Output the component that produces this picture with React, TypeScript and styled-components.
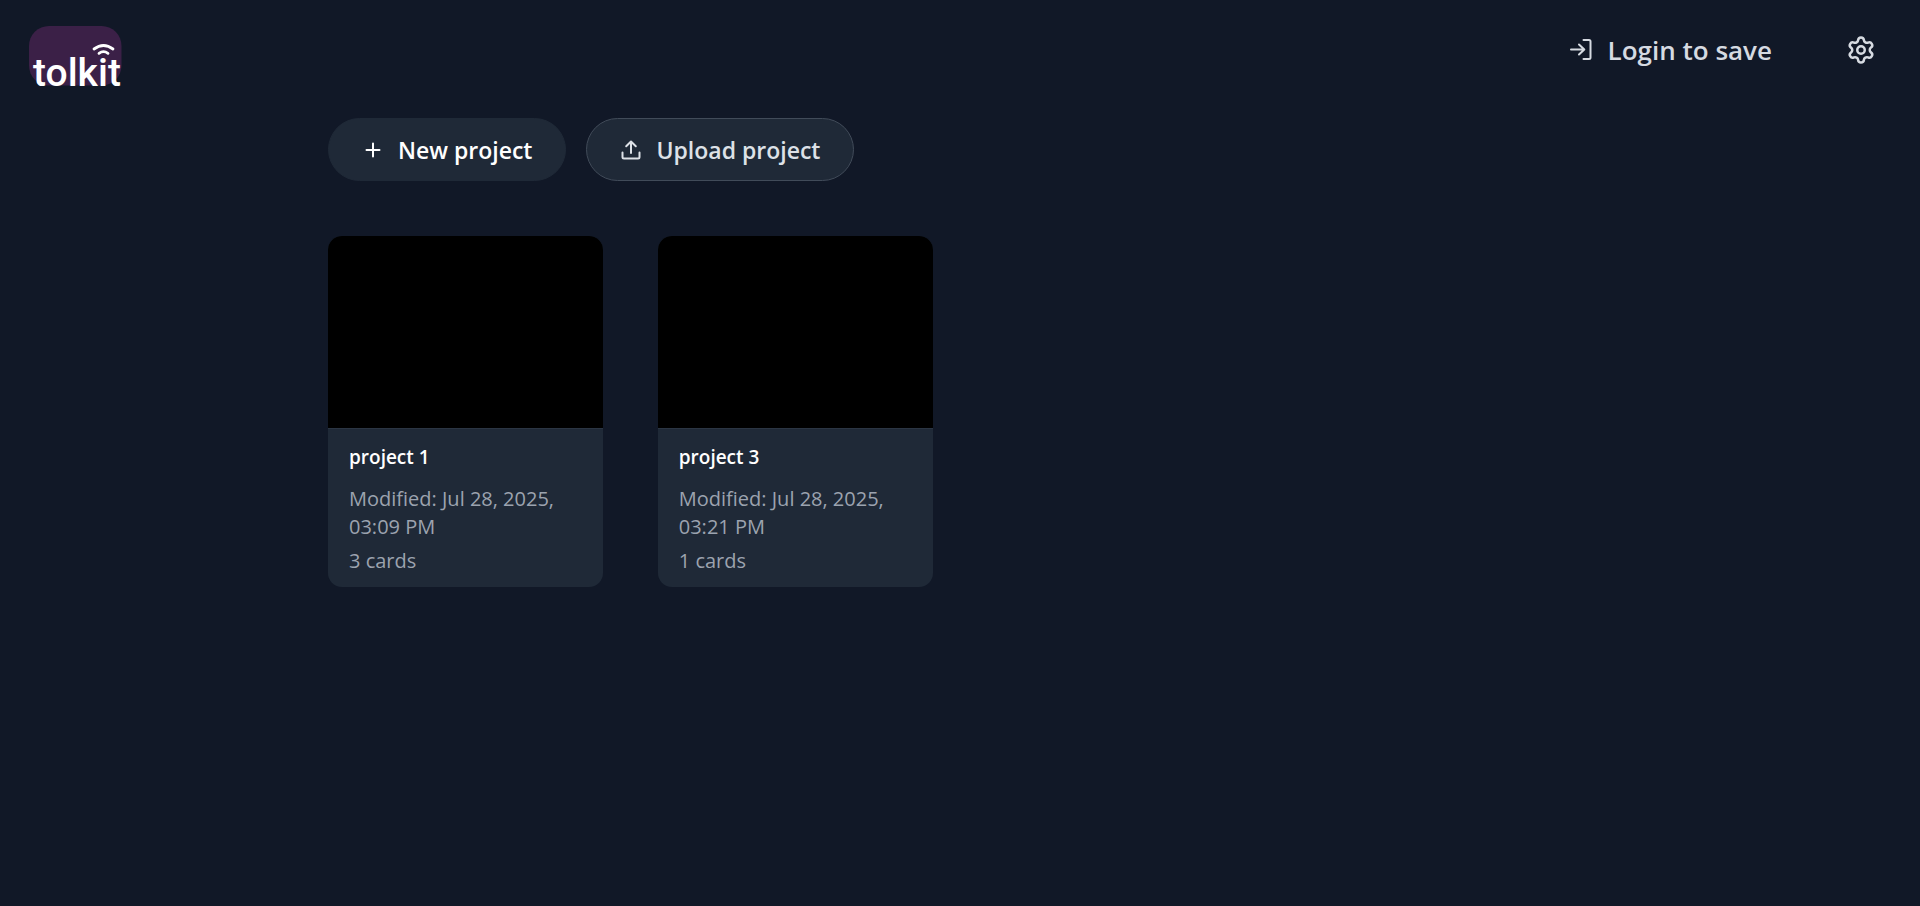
import React from "react";
import styled, { createGlobalStyle } from "styled-components";
import { Settings } from "lucide-react";

const GlobalStyle = createGlobalStyle`
  *, *::before, *::after { box-sizing: border-box; }
  body {
    margin: 0;
    background: #111827;
    color: #ffffff;
    font-family: "Segoe UI", "Open Sans", "Noto Sans", sans-serif;
  }
`;

const Page = styled.div`
  min-height: 100vh;
  padding: 24px 28px;
`;

const Header = styled.header`
  display: flex;
  justify-content: space-between;
  align-items: flex-start;
`;

const LogoLink = styled.a`
  display: block;
  height: 76px;
  color: #ffffff;
`;

const LogoText = styled.text`
  font-family: Roboto, sans-serif;
  font-size: 39px;
  font-weight: 500;
  fill: currentColor;
`;

const HeaderActions = styled.div`
  display: flex;
  align-items: center;
  gap: 74px;
  height: 52px;
  padding-right: 16px;
`;

const PlainButton = styled.button`
  display: flex;
  align-items: center;
  gap: 15px;
  padding: 0;
  border: 0;
  background: none;
  color: #d6dae1;
  font: inherit;
  font-size: 26px;
  line-height: 36px;
  font-weight: 600;
  cursor: pointer;
`;

const StrokeIcon = styled.svg`
  flex: none;
  fill: none;
  stroke: currentColor;
  stroke-width: 2;
  stroke-linecap: round;
  stroke-linejoin: round;
`;

const Main = styled.main`
  max-width: 1264px;
  margin: 0 auto;
  padding-top: 18px;
`;

const Toolbar = styled.div`
  display: flex;
  flex-wrap: wrap;
  gap: 20px;
  margin-bottom: 55px;
`;

const PillButton = styled.button<{ $outlined?: boolean }>`
  display: flex;
  align-items: center;
  gap: 14px;
  height: 63px;
  padding: 0 33px;
  border: 1px solid ${(p) => (p.$outlined ? "#414b59" : "#1f2937")};
  border-radius: 32px;
  background: #1f2937;
  color: ${(p) => (p.$outlined ? "#dde1e7" : "#ffffff")};
  font: inherit;
  font-size: 23px;
  font-weight: 600;
  cursor: pointer;
`;

const ProjectGrid = styled.div`
  display: grid;
  grid-template-columns: repeat(auto-fill, minmax(260px, 1fr));
  gap: 55px;
`;

const Card = styled.article`
  overflow: hidden;
  border-radius: 14px;
  background: #1f2937;
`;

const Preview = styled.div`
  height: 192px;
  background: #000000;
`;

const CardBody = styled.div`
  padding: 15px 21px 12px;
  border-top: 1px solid #2b3543;
`;

const CardTitle = styled.h2`
  margin: 0 0 14px;
  font-size: 19px;
  line-height: 27px;
  font-weight: 600;
`;

const CardMeta = styled.p`
  margin: 0 0 6px;
  color: #9ca3af;
  font-size: 20px;
  line-height: 28px;

  &:last-child {
    margin-bottom: 0;
  }
`;

const projects = [
  { name: "project 1", modified: "Jul 28, 2025, 03:09 PM", cards: 3 },
  { name: "project 3", modified: "Jul 28, 2025, 03:21 PM", cards: 1 },
];

function Logo() {
  return (
    <svg width="100" height="76" viewBox="0 0 100 76" role="img" aria-label="tolkit">
      <rect x="1" y="2" width="92.500" height="59.500" rx="20" fill="#3b2047" />
      <LogoText x="5" y="62">
        tolkit
      </LogoText>
      <g fill="none" stroke="currentColor" strokeWidth="2.800" strokeLinecap="round">
        <path d="M66 25Q75.500 18 85 25" />
        <path d="M71 29.300Q75.500 26 80 29.300" />
      </g>
    </svg>
  );
}

function LoginIcon() {
  return (
    <StrokeIcon width="24" height="24" viewBox="0 0 24 24" aria-hidden="true">
      <path d="M14.500 2H20a1.500 1.500 0 0 1 1.500 1.500v16a1.500 1.500 0 0 1-1.500 1.500h-5.500" />
      <path d="M2 11.500h13M10 6.500l5.300 5-5.300 5" />
    </StrokeIcon>
  );
}

function PlusIcon() {
  return (
    <StrokeIcon width="22" height="22" viewBox="0 0 22 22" aria-hidden="true">
      <path d="M11 4.500v13M4.500 11h13" />
    </StrokeIcon>
  );
}

function UploadIcon() {
  return (
    <StrokeIcon width="22" height="22" viewBox="0 0 22 22" aria-hidden="true">
      <path d="M2.500 13.500V18a1.500 1.500 0 0 0 1.500 1.500h14a1.500 1.500 0 0 0 1.500-1.500v-4.500" />
      <path d="M11 14V2.500M6.200 7.300 11 2.500l4.800 4.800" />
    </StrokeIcon>
  );
}

export default function App() {
  return (
    <Page>
      <GlobalStyle />
      <Header>
        <LogoLink href="#">
          <Logo />
        </LogoLink>
        <HeaderActions>
          <PlainButton type="button">
            <LoginIcon />
            Login to save
          </PlainButton>
          <PlainButton type="button" aria-label="Settings">
            <Settings size={30} strokeWidth={2} />
          </PlainButton>
        </HeaderActions>
      </Header>
      <Main>
        <Toolbar>
          <PillButton type="button">
            <PlusIcon />
            New project
          </PillButton>
          <PillButton type="button" $outlined>
            <UploadIcon />
            Upload project
          </PillButton>
        </Toolbar>
        <ProjectGrid>
          {projects.map((project) => (
            <Card key={project.name}>
              <Preview />
              <CardBody>
                <CardTitle>{project.name}</CardTitle>
                <CardMeta>{`Modified: ${project.modified}`}</CardMeta>
                <CardMeta>{`${project.cards} cards`}</CardMeta>
              </CardBody>
            </Card>
          ))}
        </ProjectGrid>
      </Main>
    </Page>
  );
}
